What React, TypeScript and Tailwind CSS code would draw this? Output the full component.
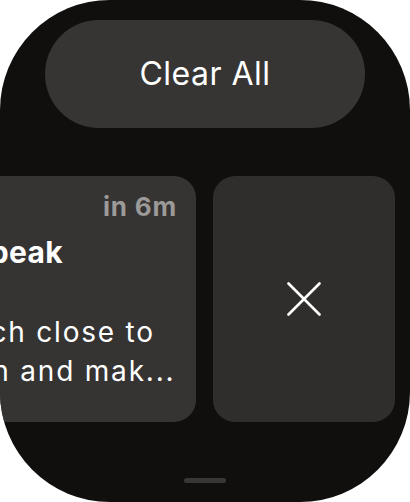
const font = { fontFamily: 'Inter, "Noto Sans", sans-serif' }

function CloseIcon() {
  return (
    <svg width="34" height="34" viewBox="0 0 34 34" fill="none" stroke="white" strokeWidth="2.6" strokeLinecap="round">
      <path d="M1.5 1.5 32.5 32.5M32.5 1.5 1.5 32.5" />
    </svg>
  )
}

// Card is swiped left, so most of it sits past the screen edge
function NotificationCard() {
  return (
    <div className="-ml-[218px] w-[414px] shrink-0 overflow-hidden rounded-[22px] bg-[#353433] pl-[20px] pr-[19px] pt-[15px]">
      <div className="flex justify-end text-[26px] font-bold leading-[32px] tracking-[0.8px] text-[#9b9a99]">in 6m</div>
      <div className="mt-[11px] whitespace-nowrap text-[30px] font-bold leading-[36px] tracking-[0.3px] text-white">
        Practice to Speak
      </div>
      <div className="mt-[43px] text-[28px] leading-[39px] tracking-[1.8px] text-white">
        <div className="whitespace-nowrap">Hold the watch close to</div>
        <div className="whitespace-nowrap">the TV screen and mak...</div>
      </div>
    </div>
  )
}

export default function App() {
  return (
    <div className="h-[502px] w-[410px] bg-white" style={font}>
      <div className="flex h-full w-full flex-col overflow-hidden rounded-[110px] bg-[#110f0e]">
        <div className="mx-[45px] mt-[20px] flex h-[108px] items-center justify-center rounded-full bg-[#363534]">
          <span className="text-[32px] tracking-[0.5px] text-white">Clear All</span>
        </div>

        <div className="mt-[48px] flex h-[246px] gap-[17px] pr-[15px]">
          <NotificationCard />
          <div className="flex w-[182px] shrink-0 items-center justify-center rounded-[22px] bg-[#2f2e2d]">
            <CloseIcon />
          </div>
        </div>

        <div className="mt-[56px] flex justify-center">
          <div className="h-[5px] w-[42px] rounded-full bg-[#383736]" />
        </div>
      </div>
    </div>
  )
}
